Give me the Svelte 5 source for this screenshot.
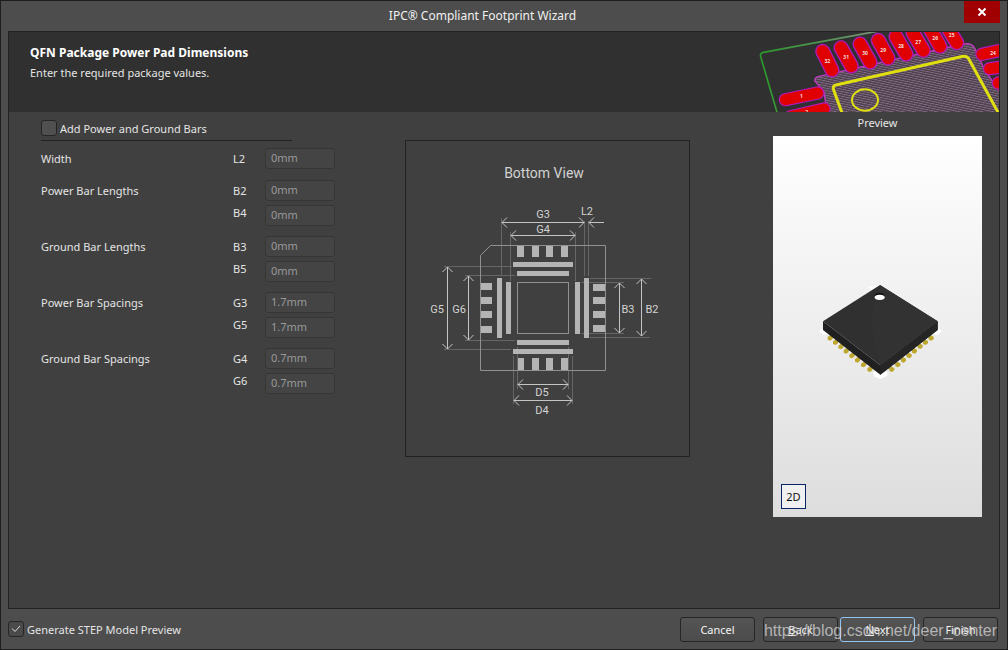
<script lang="ts">
  type Field = { code: string; value: string }
  type Group = { label: string; fields: Field[] }

  let addBars = $state(false)
  let generateStep = $state(true)

  let groups: Group[] = $state([
    { label: 'Width', fields: [{ code: 'L2', value: '0mm' }] },
    { label: 'Power Bar Lengths', fields: [{ code: 'B2', value: '0mm' }, { code: 'B4', value: '0mm' }] },
    { label: 'Ground Bar Lengths', fields: [{ code: 'B3', value: '0mm' }, { code: 'B5', value: '0mm' }] },
    { label: 'Power Bar Spacings', fields: [{ code: 'G3', value: '1.7mm' }, { code: 'G5', value: '1.7mm' }] },
    { label: 'Ground Bar Spacings', fields: [{ code: 'G4', value: '0.7mm' }, { code: 'G6', value: '0.7mm' }] },
  ])

  // x, y, width, height of the filled pads and bars
  const pads = [
    [517, 246, 7, 11], [532, 246, 7, 11], [546, 246, 7, 11], [561, 246, 7, 11],
    [518, 358, 6, 12], [532, 358, 7, 12], [546, 358, 7, 12], [561, 358, 7, 12],
    [481, 283, 11, 7], [481, 297, 11, 7], [481, 311, 11, 7], [481, 326, 11, 7],
    [593, 284, 12, 7], [593, 297, 12, 7], [593, 311, 12, 7], [593, 325, 12, 7],
    [513, 262, 60, 5], [517, 271, 52, 5], [517, 340, 52, 5], [513, 349, 60, 5],
    [497, 278, 5, 60], [506, 282, 5, 52], [575, 282, 5, 52], [584, 278, 5, 60],
  ]

  const extensions =
    'M501.5 218V276M510.5 232V281M575.5 232V281M584.5 221V276M588.5 221V276' +
    'M444 266.5H512M444 349.5H511M465 275.5H515M465 340.5H515' +
    'M581 282.5H624M581 333.5H624M590 278.5H651M590 337.5H650' +
    'M517.5 347V389M568.5 347V389M513.5 356V404M572.5 356V404'

  const horizontal = (x1: number, x2: number, y: number) =>
    `M${x1} ${y}H${x2}M${x1 + 5} ${y - 5}L${x1} ${y}l5 5M${x2 - 5} ${y - 5}L${x2} ${y}l-5 5`
  const vertical = (y1: number, y2: number, x: number) =>
    `M${x} ${y1}V${y2}M${x - 5} ${y1 + 5}L${x} ${y1}l5 5M${x - 5} ${y2 - 5}L${x} ${y2}l5 -5`

  const dimensions = [
    horizontal(502, 584, 222.5),
    horizontal(511, 575, 235.5),
    horizontal(518, 568, 384.5),
    horizontal(514, 572, 400.5),
    vertical(267, 349, 447.5),
    vertical(276, 340, 468.5),
    vertical(283, 333, 619.5),
    vertical(279, 336, 641.5),
    'M604 222.5H589M594 217.5L589 222.5l5 5',
  ]

  const labels: [string, number, number][] = [
    ['G3', 543, 218], ['L2', 587, 215], ['G4', 543, 233],
    ['G5', 437, 313], ['G6', 459, 313], ['B3', 628, 313], ['B2', 652, 313],
    ['D5', 542, 396], ['D4', 542, 414],
  ]

  // outer ends of the slanted pads in the banner, with their numbers
  const bannerPads: [number, number, number, number, string][] = [
    [218, 154, 246, 210, '32'], [273, 143, 304, 198, '31'], [330, 132, 360, 186, '30'],
    [385, 121, 414, 174, '29'], [438, 110, 468, 162, '28'], [489, 99, 520, 151, '27'],
    [541, 88, 570, 139, '26'], [590, 78, 620, 128, '25'],
  ]

  const leads = [
    [60, 190], [76, 203], [92, 216], [108, 229], [125, 243], [142, 256], [160, 270], [179, 284],
    [245, 284], [263, 270], [280, 256], [297, 243], [313, 229], [330, 215], [346, 203], [363, 190],
  ]
</script>

<div class="window">
  <header class="titlebar">
    <h1>IPC® Compliant Footprint Wizard</h1>
    <button class="close" type="button" aria-label="Close">
      <svg viewBox="0 0 10 10" width="10" height="10"><path d="M1.5 1.5l7 7M8.5 1.5l-7 7" /></svg>
    </button>
  </header>

  <main class="panel">
    <section class="banner">
      <div class="intro">
        <h2>QFN Package Power Pad Dimensions</h2>
        <p>Enter the required package values.</p>
      </div>
      <svg class="board" viewBox="27 96 720 240" width="240" height="80" aria-hidden="true">
        <defs>
          <pattern id="hatch" width="7" height="7" patternUnits="userSpaceOnUse" patternTransform="rotate(12)">
            <rect width="7" height="7" fill="#3c383c" />
            <path d="M0 1.5H7" stroke="#9a779a" stroke-width="2.5" />
            <path d="M1.5 0V7" stroke="#6d596d" stroke-width="1.5" />
          </pattern>
          <linearGradient id="edge" x1="0" x2="1">
            <stop offset="0" stop-color="#2a9a2a" />
            <stop offset="1" stop-color="#789078" />
          </linearGradient>
        </defs>
        <path d="M82 340L32 170Q29 160 40 157L380 94" fill="none" stroke="url(#edge)" stroke-width="5" />
        <path class="copper" d="M232 344L222 275L194 242Q194 233 204 230L640 132Q665 127 674 145L684 165L702 206L728 245L762 290V344Z" />
        {#each bannerPads as [x1, y1, x2, y2, name]}
          <path class="pad-edge" d="M{x1} {y1}L{x2} {y2}" />
          <path class="pad" d="M{x1} {y1}L{x2} {y2}" />
          <text x={(x1 + x2) / 2} y={(y1 + y2) / 2 + 7}>{name}</text>
        {/each}
        {#each ['M106 299L203 279', 'M122 350L222 327', 'M696 163L780 145', 'M719 206L780 198', 'M745 249L790 246'] as d}
          <path class="pad-edge small" {d} />
          <path class="pad small" {d} />
        {/each}
        <text x="154" y="293">1</text>
        <text x="170" y="343">2</text>
        <text x="729" y="164">24</text>
        <path class="silk" d="M278 344L250 267Q248 257 258 255L640 169Q650 167 656 176L748 344" />
        <ellipse class="silk ring" cx="345" cy="300" rx="39" ry="32" />
      </svg>
    </section>

    <div class="content">
      <form class="form">
        <label class="toggle">
          <input type="checkbox" bind:checked={addBars} />
          <span>Add Power and Ground Bars</span>
        </label>
        <div class="rule"></div>
        <div class="groups">
          {#each groups as group}
            <div class="group">
              <span class="name">{group.label}</span>
              <div class="codes">
                {#each group.fields as field}
                  <label for={field.code}>{field.code}</label>
                {/each}
              </div>
              <div class="inputs">
                {#each group.fields as field}
                  <input id={field.code} type="text" bind:value={field.value} disabled={!addBars} />
                {/each}
              </div>
            </div>
          {/each}
        </div>
      </form>

      <figure class="diagram">
        <svg viewBox="406 141 283 315" role="img" aria-label="Bottom view dimensions">
          <path class="extension" d={extensions} />
          <path class="outline" d="M490.5 245.5H605.5V370.5H480.5V255.5Z" />
          <rect class="outline" x="517.5" y="282.5" width="51" height="51" />
          {#each pads as [x, y, width, height]}
            <rect class="solid" {x} {y} {width} {height} />
          {/each}
          {#each dimensions as d}
            <path class="dimension" {d} />
          {/each}
          <text class="caption" x="544" y="178">Bottom View</text>
          {#each labels as [name, x, y]}
            <text {x} {y}>{name}</text>
          {/each}
        </svg>
      </figure>

      <section class="preview">
        <h3>Preview</h3>
        <div class="viewport">
          <svg viewBox="-111 -417 627 1143" role="img" aria-label="Package model">
            <path d="M174 36L210 30L250 56L210 68ZM27 168L40 160L54 176L40 180ZM396 168L383 160L369 176L383 180ZM190 292L210 282L232 292V302L210 312L192 304Z" fill="#fff" />
            {#each leads as [x, y]}
              <ellipse cx={x < 210 ? x + 7 : x - 7} cy={y - 8} rx="7" ry="7" fill="#999" />
              <path d="M{x - 7} {y - 4}l7 -5 8 4v7l-7 5 -8 -3z" fill="#bda72e" />
            {/each}
            <path d="M39 139L211 271L383 139V165L211 299L39 165Z" fill="#202020" />
            <path d="M211 271L383 139V165L211 299Z" fill="#252525" />
            <path d="M210 30L383 139L211 271L39 139Z" fill="#303030" />
            <path d="M210 30L180 134L211 271L383 139Z" fill="#323232" />
            <ellipse cx="209" cy="62" rx="15" ry="9" fill="#151515" />
            <ellipse cx="209" cy="67" rx="15" ry="8" fill="#fff" />
          </svg>
          <button class="mode" type="button">2D</button>
        </div>
      </section>
    </div>
  </main>

  <footer class="footer">
    <label class="toggle">
      <input type="checkbox" bind:checked={generateStep} />
      <span>Generate STEP Model Preview</span>
    </label>
    <div class="actions">
      <button type="button">Cancel</button>
      <div class="steps">
        <button type="button"><u>B</u>ack</button>
        <button class="primary" type="button"><u>N</u>ext</button>
      </div>
      <button type="button">Finish</button>
    </div>
    <span class="watermark">https://blog.csdn.net/deer_center</span>
  </footer>
</div>

<style>
  :global(body) {
    background: #4d4d4d;
  }

  .window {
    box-sizing: border-box;
    display: flex;
    flex-direction: column;
    min-height: 100vh;
    border: 1px solid #1e1e1e;
    background: #4d4d4d;
    color: #e4e4e4;
    font: 11px/16px 'Noto Sans', sans-serif;
  }

  h1,
  h2,
  h3,
  p,
  figure {
    margin: 0;
    font-size: inherit;
    font-weight: 400;
  }

  button,
  input {
    box-sizing: border-box;
    margin: 0;
    padding: 0;
    color: inherit;
    font: inherit;
  }

  .titlebar {
    display: flex;
    align-items: flex-start;
    height: 30px;
    padding-right: 7px;
  }

  .titlebar h1 {
    flex: 1;
    color: #f0f0f0;
    font-size: 12px;
    line-height: 30px;
    text-align: center;
  }

  .close {
    display: grid;
    place-items: center;
    width: 36px;
    height: 22px;
    border: 0;
    background: #a00000;
  }

  .close path {
    stroke: #fff;
    stroke-width: 2;
  }

  .panel {
    display: flex;
    flex: 1;
    flex-direction: column;
    margin: 0 7px;
    border: 1px solid #222;
    background: #404040;
  }

  .banner {
    display: flex;
    justify-content: space-between;
    height: 80px;
    background: #303030;
  }

  .intro {
    padding: 13px 0 0 21px;
  }

  .intro h2 {
    color: #fff;
    font-size: 12px;
    font-weight: 700;
  }

  .intro p {
    margin-top: 4px;
  }

  .board .copper {
    fill: url(#hatch);
    stroke: #c03cc0;
    stroke-width: 4;
  }

  .board .pad-edge,
  .board .pad {
    fill: none;
    stroke: #b01ab8;
    stroke-width: 45;
    stroke-linecap: round;
  }

  .board .pad {
    stroke: #e00000;
    stroke-width: 37;
  }

  .board .pad-edge.small {
    stroke-width: 40;
  }

  .board .pad.small {
    stroke-width: 33;
  }

  .board text {
    fill: #f4dede;
    font-size: 15px;
    font-weight: 700;
    text-anchor: middle;
  }

  .board .silk {
    fill: none;
    stroke: #e0e010;
    stroke-width: 9;
  }

  .board .ring {
    stroke-width: 6;
  }

  .content {
    display: flex;
    align-items: flex-start;
    padding: 0 17px 0 32px;
  }

  .form {
    width: 294px;
    margin-right: 70px;
    padding-top: 8px;
  }

  .toggle {
    display: flex;
    align-items: center;
    gap: 3px;
    height: 16px;
    line-height: 18px;
  }

  .toggle span {
    padding-top: 2px;
  }

  .toggle input {
    width: 16px;
    height: 16px;
    border: 1px solid #262626;
    border-radius: 3px;
    background: #505050;
    appearance: none;
  }

  .toggle input:checked {
    background: url("data:image/svg+xml,%3Csvg xmlns='http://www.w3.org/2000/svg' viewBox='0 0 14 14'%3E%3Cpath d='M3 6.5l3 3 5-5.500' fill='none' stroke='%23ddd'/%3E%3C/svg%3E") #4a4a4a;
  }

  .rule {
    width: 251px;
    height: 1px;
    margin-top: 4px;
    background: #222;
  }

  .groups {
    display: flex;
    flex-direction: column;
    gap: 10px;
    padding-top: 7px;
  }

  .group {
    display: grid;
    grid-template-columns: 192px 32px 1fr;
    line-height: 22px;
  }

  .codes,
  .inputs {
    display: flex;
    flex-direction: column;
  }

  .codes {
    height: 0;
  }

  .inputs {
    gap: 4px;
  }

  .inputs input {
    width: 100%;
    height: 21px;
    padding: 0 5px 2px;
    border: 1px solid #363636;
    border-radius: 3px;
    background: #444;
  }

  .inputs input:disabled {
    color: #999;
  }

  .diagram {
    box-sizing: border-box;
    width: 285px;
    margin-top: 28px;
    border: 1px solid #222;
  }

  .diagram svg,
  .viewport svg {
    display: block;
    width: 100%;
  }

  .diagram text {
    fill: #d2d2d2;
    font: 11px Roboto, sans-serif;
    text-anchor: middle;
  }

  .diagram .caption {
    font-size: 14px;
  }

  .extension,
  .outline,
  .dimension {
    fill: none;
    stroke: #666;
  }

  .outline {
    stroke: #919191;
  }

  .dimension {
    stroke: #c4c4c4;
  }

  .solid {
    fill: #b4b4b4;
  }

  .preview {
    width: 209px;
    margin-left: auto;
  }

  .preview h3 {
    padding-bottom: 2px;
    line-height: 22px;
    text-align: center;
  }

  .viewport {
    position: relative;
    background: linear-gradient(#fff, #ddd);
  }

  .mode {
    position: absolute;
    bottom: 8px;
    left: 8px;
    width: 25px;
    height: 25px;
    border: 1px solid #0a246a;
    background: #f0f0f0;
    color: #111;
  }

  .footer {
    position: relative;
    display: flex;
    align-items: center;
    justify-content: space-between;
    height: 40px;
    padding: 0 9px 0 7px;
  }

  .actions {
    display: flex;
    gap: 8px;
  }

  .steps {
    display: flex;
    gap: 2px;
  }

  .actions button {
    width: 75px;
    height: 25px;
    padding-top: 2px;
    border: 1px solid #262626;
    border-radius: 3px;
    background: linear-gradient(#545454, #4c4c4c);
    color: #f4f4f4;
  }

  .actions .primary {
    border-color: #93c4f0;
  }

  .watermark {
    position: absolute;
    right: 10px;
    bottom: 9px;
    color: rgba(215, 215, 215, 0.75);
    font: 16px/18px 'Liberation Sans', sans-serif;
    pointer-events: none;
  }
</style>
